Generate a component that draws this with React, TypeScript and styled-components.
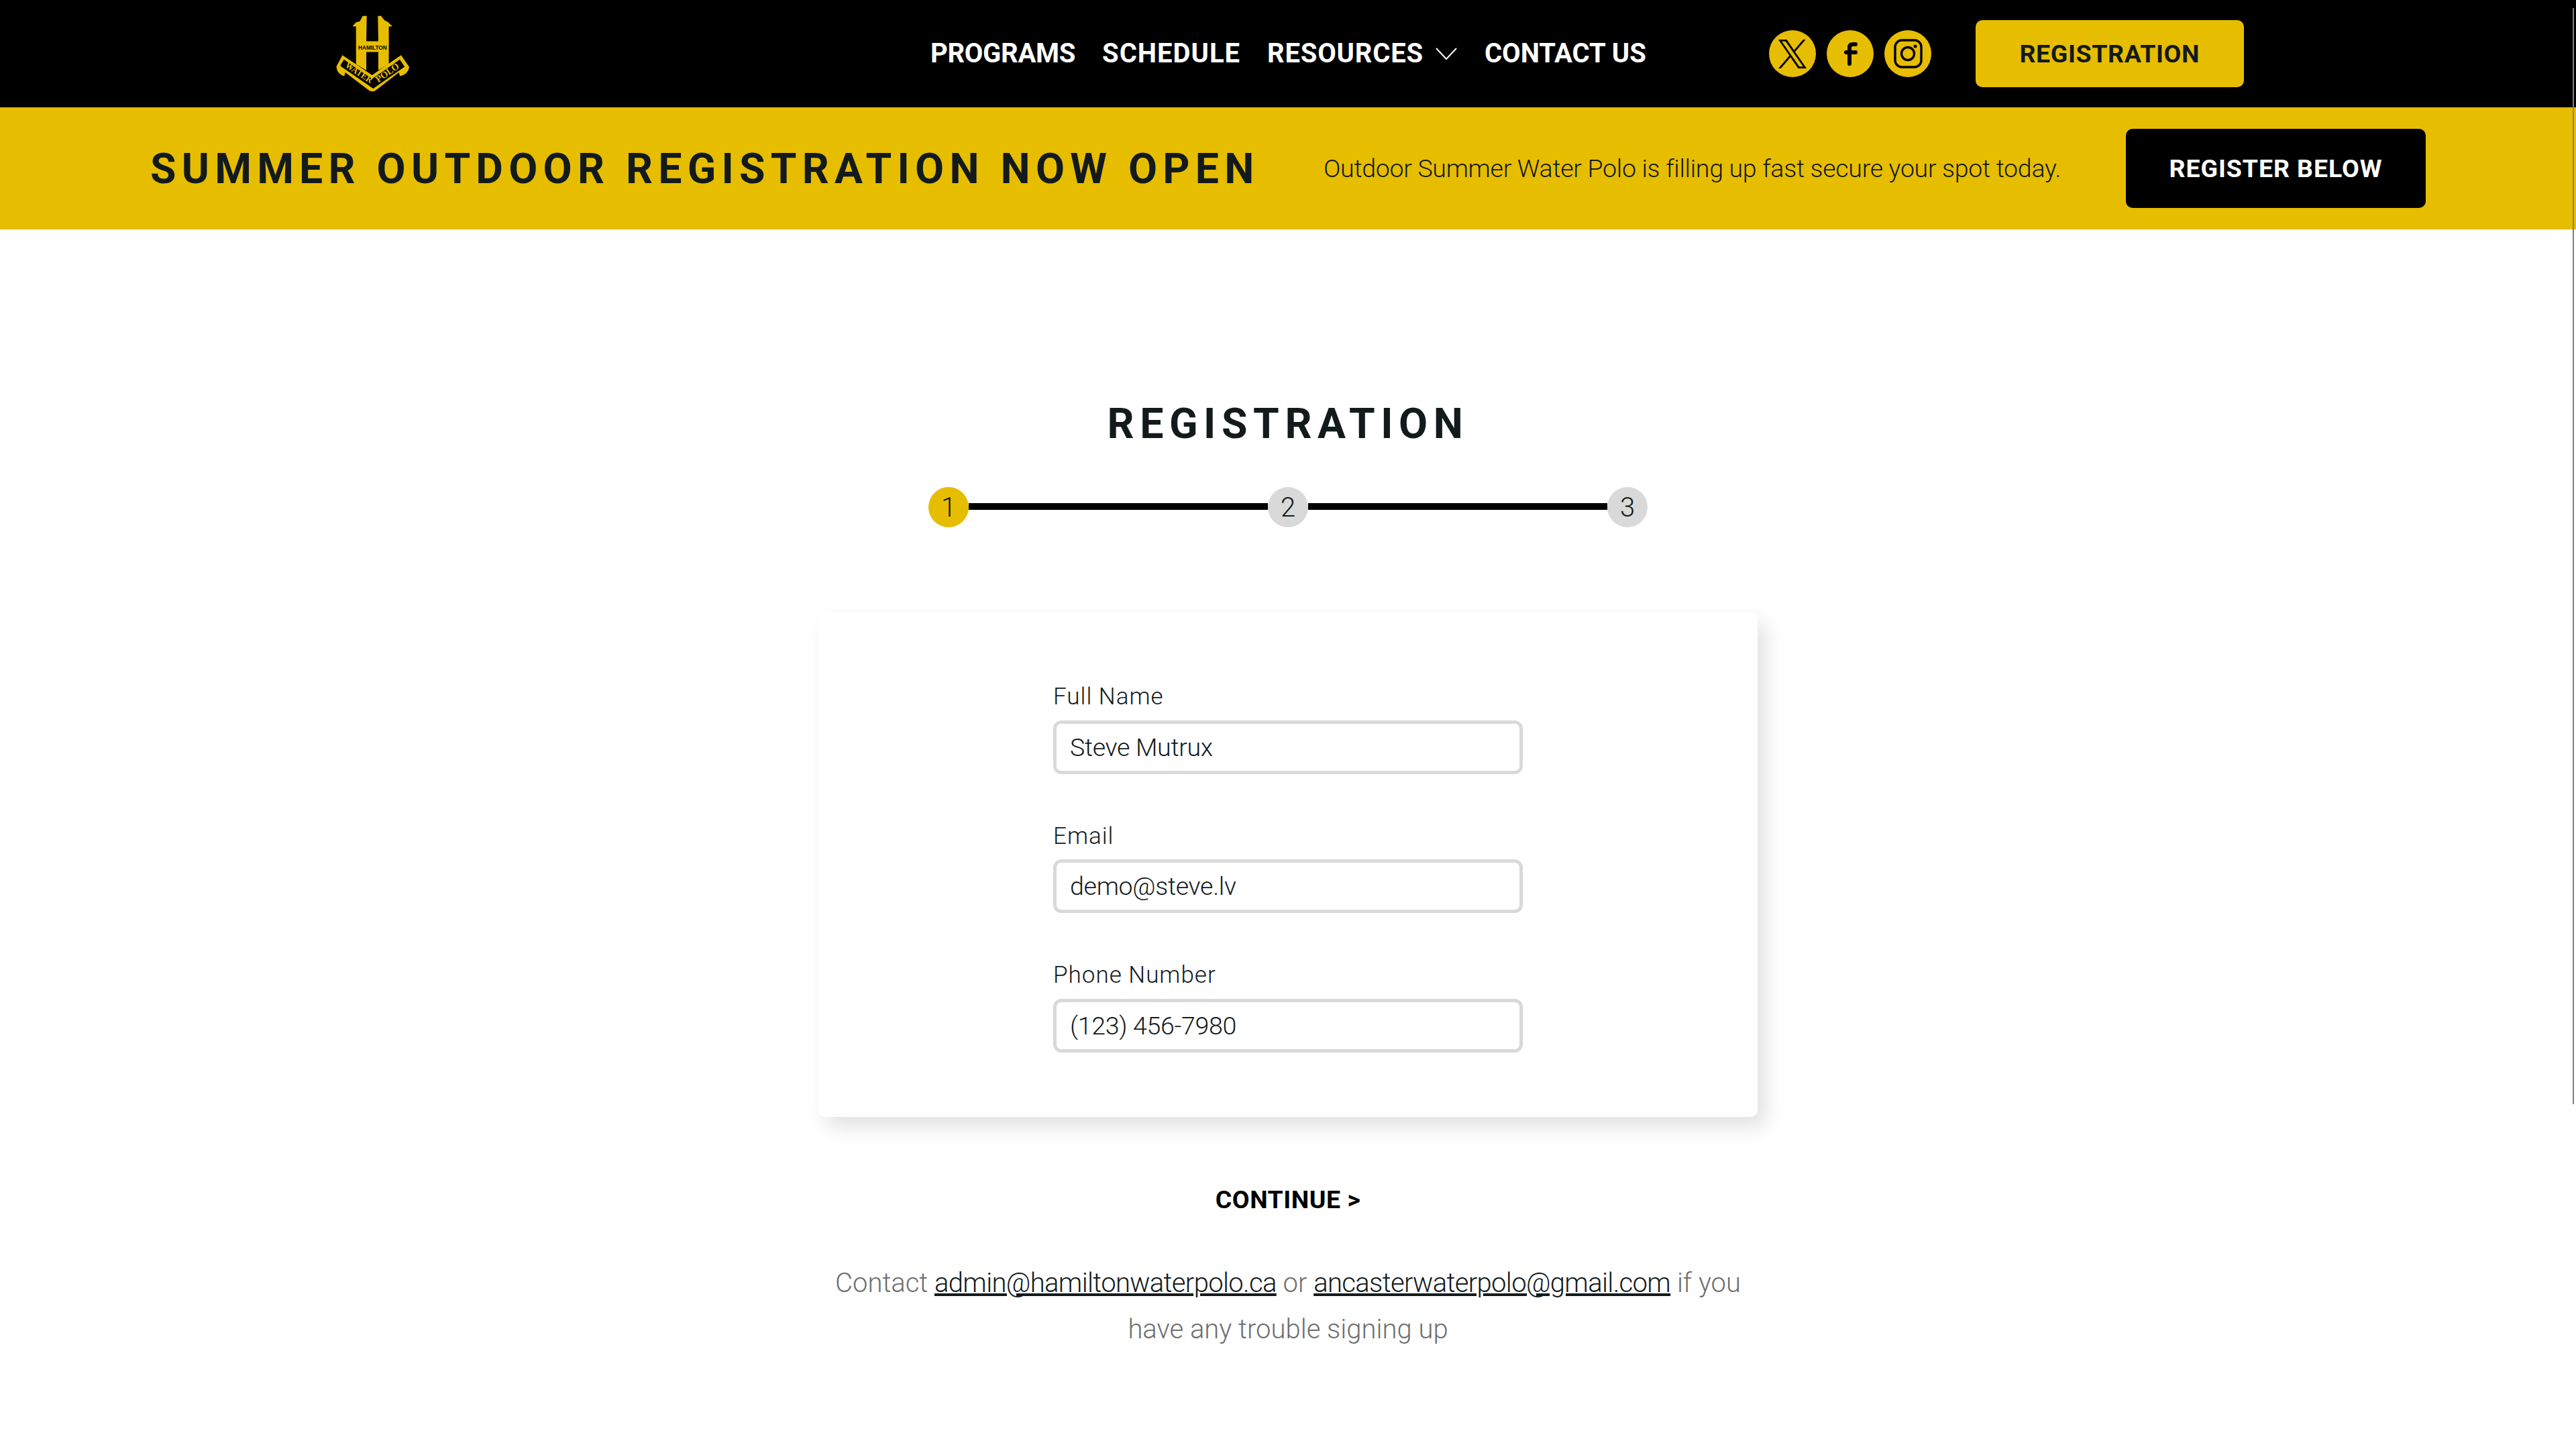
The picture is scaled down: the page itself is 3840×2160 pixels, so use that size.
import React from "react";
import styled, { createGlobalStyle } from "styled-components";

const Global = createGlobalStyle`
  html, body { margin: 0; padding: 0; background: #fff; overflow: hidden; }
  body { font-family: Roboto, "Liberation Sans", sans-serif; color: #121a1c; }
  * { box-sizing: border-box; }
`;

const YELLOW = "#e7bd00";
const INK = "#121a1c";

const Page = styled.div`
  position: relative;
  width: 3840px;
  height: 2160px;
  overflow: hidden;
`;
const Scrollbar = styled.div`
  position: absolute;
  top: 12px;
  right: 3px;
  width: 2px;
  height: 1634px;
  background: #808080;
`;
const Header = styled.header`
  height: 160px;
  background: #000;
  display: flex;
  align-items: center;
  padding-left: 498px;
`;
const Logo = styled.svg`
  width: 115px;
  height: 118px;
  flex: none;
`;
const Nav = styled.nav`
  display: flex;
  align-items: center;
  gap: 40px;
  margin-left: 774px;
`;
const NavLink = styled.a<{ $spacing?: number }>`
  display: flex;
  align-items: center;
  gap: 18px;
  color: #fff;
  font-size: 40px;
  font-weight: 700;
  line-height: 60px;
  letter-spacing: ${(p) => p.$spacing ?? 0}px;
  white-space: nowrap;
`;
const Chevron = styled.svg`
  width: 32px;
  height: 18px;
  margin-right: 1px;
`;
const Socials = styled.div`
  display: flex;
  gap: 16px;
  margin-left: 183px;
`;
const Social = styled.a`
  width: 70px;
  height: 70px;
  border-radius: 50%;
  background: ${YELLOW};
  display: block;
`;
const SocialIcon = styled.svg`
  width: 70px;
  height: 70px;
  display: block;
`;
const HeaderButton = styled.a`
  width: 400px;
  height: 100px;
  margin-left: 66px;
  background: ${YELLOW};
  border-radius: 10px;
  color: ${INK};
  font-size: 37.5px;
  font-weight: 700;
  letter-spacing: 0.6px;
  display: flex;
  align-items: center;
  justify-content: center;
`;
const Banner = styled.section`
  height: 182px;
  background: ${YELLOW};
  display: flex;
  align-items: center;
  padding-left: 224px;
`;
const BannerTitle = styled.h2`
  margin: 0;
  width: 1749px;
  font-size: 62.5px;
  font-weight: 700;
  letter-spacing: 8.25px;
  color: ${INK};
  white-space: nowrap;
`;
const BannerText = styled.p`
  margin: 0;
  width: 1196px;
  font-size: 37.5px;
  font-weight: 300;
  letter-spacing: -0.29px;
  color: ${INK};
  white-space: nowrap;
`;
const BannerButton = styled.a`
  width: 447px;
  height: 118px;
  background: #000;
  border-radius: 10px;
  color: #fff;
  font-size: 37.5px;
  font-weight: 700;
  letter-spacing: 0.9px;
  display: flex;
  align-items: center;
  justify-content: center;
`;
const Main = styled.main`
  display: flex;
  flex-direction: column;
  align-items: center;
`;
const Title = styled.h1`
  margin: 250px 0 0;
  font-size: 62.5px;
  line-height: 80px;
  font-weight: 700;
  letter-spacing: 8.6px;
  color: ${INK};
`;
const Stepper = styled.div`
  margin-top: 54px;
  width: 1072px;
  display: flex;
  align-items: center;
`;
const Step = styled.div<{ $active?: boolean }>`
  width: 60px;
  height: 60px;
  flex: none;
  border-radius: 50%;
  background: ${(p) => (p.$active ? YELLOW : "#d9d9d9")};
  color: ${INK};
  font-size: 40px;
  font-weight: 300;
  display: flex;
  align-items: center;
  justify-content: center;
`;
const StepLine = styled.div`
  flex: 1;
  height: 10px;
  margin-top: -2px;
  background: #000;
`;
const Card = styled.form`
  margin-top: 127px;
  width: 1400px;
  height: 752px;
  padding: 100px 350px 0;
  background: #fff;
  border-radius: 10px;
  box-shadow: 12px 15px 30px rgba(0, 0, 0, 0.12);
  display: flex;
  flex-direction: column;
  gap: 67px;
`;
const Field = styled.label`
  display: flex;
  flex-direction: column;
  gap: 8px;
`;
const FieldLabel = styled.span`
  font-size: 35px;
  line-height: 52.5px;
  font-weight: 300;
  letter-spacing: 1px;
  color: ${INK};
`;
const Input = styled.input`
  width: 700px;
  height: 80px;
  padding: 0 20px;
  border: 5px solid #d9d9d9;
  border-radius: 12px;
  background: #fff;
  font-family: inherit;
  font-size: 37.5px;
  font-weight: 300;
  letter-spacing: -0.3px;
  color: ${INK};
`;
const Continue = styled.a`
  margin-top: 96px;
  font-size: 37.5px;
  line-height: 54px;
  font-weight: 700;
  letter-spacing: 0.5px;
  color: #000;
`;
const Help = styled.p`
  margin: 63px 0 0;
  width: 1400px;
  text-align: center;
  font-size: 40px;
  line-height: 69px;
  font-weight: 300;
  color: #6f6f6f;
`;
const HelpLink = styled.a`
  color: ${INK};
  letter-spacing: -0.65px;
  text-decoration: underline;
`;

export default function App() {
  return (
    <Page>
      <Global />
      <Header>
        <Logo viewBox="170 60 345 355" aria-label="Hamilton Water Polo">
          <path
            fill={YELLOW}
            d="M252 115 L268 97 L285 92 L298 68 L316 68 L314 182 L368 182 L366 68 L380 68 L396 88 L412 96 L431 116 L415 116 L415 285 L368 312 L368 230 L314 230 L314 312 L268 285 L268 116 Z"
          />
          <text x="342" y="218" textAnchor="middle" fill="#000" fontFamily="'Liberation Sans', sans-serif" fontWeight="700" fontSize="28" textLength="128" lengthAdjust="spacingAndGlyphs">HAMILTON</text>
          <path
            fill={YELLOW}
            d="M207 244 L340 334 L470 244 L507 298 Q500 332 465 338 L460 322 L356 402 Q342 412 326 402 L220 322 L215 338 Q182 330 180 295 Z"
          />
          <path fill="#000" d="M214 264 L340 350 L464 264 L486 296 L345 394 L197 292 Z" />
          <text transform="translate(216 296) rotate(33)" fill={YELLOW} fontFamily="'Liberation Serif', serif" fontWeight="700" fontSize="44" textLength="138" lengthAdjust="spacingAndGlyphs">WATER</text>
          <text transform="translate(368 368) rotate(-35)" fill={YELLOW} fontFamily="'Liberation Serif', serif" fontWeight="700" fontSize="44" textLength="118" lengthAdjust="spacingAndGlyphs">POLO</text>
        </Logo>
        <Nav>
          <NavLink $spacing={-0.3}>PROGRAMS</NavLink>
          <NavLink $spacing={1}>SCHEDULE</NavLink>
          <NavLink $spacing={0.8}>
            RESOURCES
            <Chevron viewBox="0 0 32 18" fill="none" stroke="#fff" strokeWidth="2">
              <path d="M1 1 L16 17 L31 1" />
            </Chevron>
          </NavLink>
          <NavLink>CONTACT US</NavLink>
        </Nav>
        <Socials>
          <Social>
            <SocialIcon viewBox="0 0 70 70">
              <g transform="translate(14 14) scale(0.035)">
                <path d="M714.163 519.284L1160.89 0H1055.03L667.137 450.887L357.328 0H0L468.492 681.821L0 1226.37H105.866L515.491 750.218L842.672 1226.37H1200L714.137 519.284H714.163ZM569.165 687.828L521.697 619.934L144.011 79.6944H306.615L611.412 515.685L658.88 583.579L1055.08 1150.3H892.476L569.165 687.854V687.828Z" />
              </g>
            </SocialIcon>
          </Social>
          <Social>
            <SocialIcon viewBox="0 0 70 70" fill="none" stroke="#000" strokeWidth="6" strokeLinecap="round">
              <path d="M34 50 V26 Q34 21 39 21 H43 M29 33 H43" />
            </SocialIcon>
          </Social>
          <Social>
            <SocialIcon viewBox="0 0 70 70" fill="none" stroke="#000" strokeWidth="3.4">
              <rect x="16" y="15" width="39" height="40" rx="10" />
              <circle cx="35" cy="35" r="9.5" />
              <circle cx="46" cy="24" r="2.5" fill="#000" stroke="none" />
            </SocialIcon>
          </Social>
        </Socials>
        <HeaderButton>REGISTRATION</HeaderButton>
      </Header>
      <Banner>
        <BannerTitle>SUMMER OUTDOOR REGISTRATION NOW OPEN</BannerTitle>
        <BannerText>Outdoor Summer Water Polo is filling up fast secure your spot today.</BannerText>
        <BannerButton>REGISTER BELOW</BannerButton>
      </Banner>
      <Main>
        <Title>REGISTRATION</Title>
        <Stepper>
          <Step $active>1</Step>
          <StepLine />
          <Step>2</Step>
          <StepLine />
          <Step>3</Step>
        </Stepper>
        <Card>
          <Field>
            <FieldLabel>Full Name</FieldLabel>
            <Input defaultValue="Steve Mutrux" />
          </Field>
          <Field>
            <FieldLabel>Email</FieldLabel>
            <Input defaultValue="demo@steve.lv" />
          </Field>
          <Field>
            <FieldLabel>Phone Number</FieldLabel>
            <Input defaultValue="(123) 456-7980" />
          </Field>
        </Card>
        <Continue>CONTINUE &gt;</Continue>
        <Help>
          Contact <HelpLink>admin@hamiltonwaterpolo.ca</HelpLink> or <HelpLink>ancasterwaterpolo@gmail.com</HelpLink> if you
          <br />
          have any trouble signing up
        </Help>
      </Main>
      <Scrollbar />
    </Page>
  );
}
